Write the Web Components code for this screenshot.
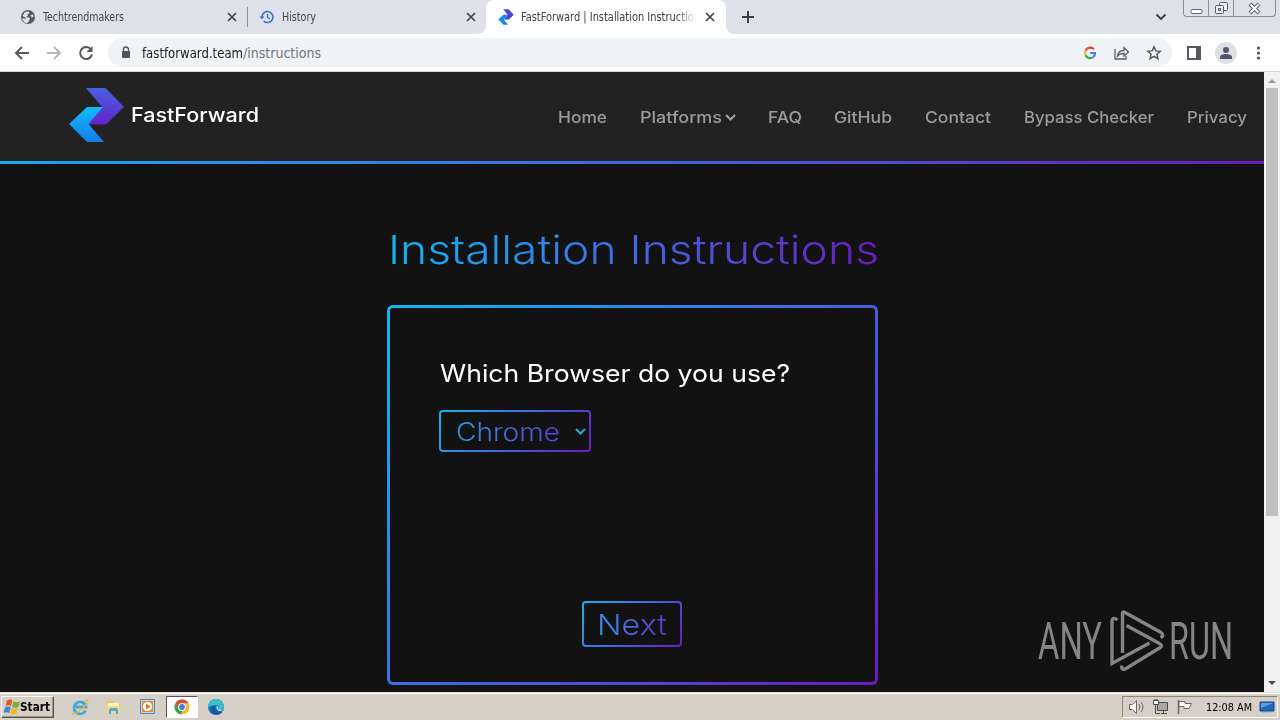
<!DOCTYPE html>
<html lang="en">
<head>
<meta charset="utf-8">
<title>FastForward | Installation Instructions</title>
<style>
html, body { margin: 0; width: 1280px; height: 720px; overflow: hidden; background: #121212; }
body { display: flex; flex-direction: column; font-family: Inter, sans-serif; }
</style>
</head>
<body>
<tab-strip></tab-strip>
<nav-toolbar></nav-toolbar>
<page-view>
  <site-header></site-header>
  <install-steps heading="Installation Instructions">Which Browser do you use?</install-steps>
</page-view>
<task-bar></task-bar>

<script>
function component(name, html) {
    customElements.define(name, class extends HTMLElement {
        connectedCallback() {
            if (this.shadowRoot) return;
            this.attachShadow({mode: 'open'});
            this.shadowRoot.innerHTML = html.replace(/\{(\w+)\}/g, (m, key) => this.getAttribute(key) || '');
        }
    });
}

const gradient = '#0fb8f2, #4268e2 50%, #6a1cbe';

component('browser-tab', `
<style>
:host { display: flex; box-sizing: border-box; width: 239px; height: 34px; align-items: center; padding: 0 1px 0 20px; position: relative; color: #42464d; }
:host([active]) { width: 240px; background: #fff; border-radius: 8px 8px 0 0; padding: 0 10px 0 12px; color: #3c4043; }
:host([active])::before, :host([active])::after { content: ''; position: absolute; bottom: 0; left: -8px; width: 8px; height: 8px; background: radial-gradient(circle at 0 0, transparent 7.5px, #fff 8px); }
:host([active])::after { left: auto; right: -8px; background: radial-gradient(circle at 100% 0, transparent 7.5px, #fff 8px); }
.title { flex: 1; margin-left: 7px; overflow: hidden; height: 20px; font: 12px/20px "DejaVu Sans Condensed", "DejaVu Sans", sans-serif; }
:host([active]) .title { -webkit-mask: linear-gradient(90deg, #000 155px, transparent 176px); }
svg { display: block; }
</style>
<slot name="icon"></slot>
<div class="title"><slot></slot></div>
<svg width="12" height="12" viewBox="0 0 12 12"><path d="M2 2l8 8M10 2l-8 8" stroke="#40444a" stroke-width="1.7"/></svg>
`);

component('tab-strip', `
<style>
:host { display: flex; height: 34px; background: #dee1e8; }
svg { display: block; }
i { width: 1px; height: 20px; margin: 7px -9px 0 8px; background: #8c9097; }
.plus { margin: 9px 0 0 14px; }
.down { margin: 12px 22px 0 auto; }
.win { display: flex; width: 91px; height: 16px; margin: 0 4px 0 -6px; border: 1px solid #8b8e95; border-top: 0; border-radius: 0 0 4px 4px; }
.win div { display: flex; width: 24px; align-items: center; justify-content: center; border-right: 1px solid #8b8e95; }
.win div:last-child { flex: 1; border: 0; }
</style>
<browser-tab>
  <svg slot="icon" width="16" height="16" viewBox="0 0 16 16"><circle cx="8" cy="8" r="7" fill="#54585e"/><path d="M2.500 7l2.500-4 3.500-.5 1 1.500-2 1.500.5 1-2 1.500 3 .5 1 1.500-1.500 3-2 1.500 1 .3C4 13.500 2 11 2.300 9l3 1 .7-1zM10.500 6l2.700-.5.3 2.500-2 .5z" fill="#dee1e8"/></svg>
  <fit-text w="81">Techtrendmakers</fit-text>
</browser-tab>
<i></i>
<browser-tab>
  <svg slot="icon" width="16" height="16" viewBox="0 0 16 16" fill="none" stroke="#3b6fd2" stroke-width="1.6"><path d="M3 8a5.500 5.500 0 1 1 1.800 4.100"/><path d="M8.500 5v3.400l2.300 1.300" stroke-width="1.300"/><path d="M.5 7.500h5L3 10.300z" fill="#3b6fd2" stroke="none"/></svg>
  <fit-text w="34">History</fit-text>
</browser-tab>
<browser-tab active style="margin-left:8px">
  <svg slot="icon" width="16" height="16" viewBox="0 0 56 56"><path d="M18 1h19l18 19-17 17H20l14-17z" fill="#5043d7"/><path d="M19 20h16L20 37l15 18H19L1 37z" fill="#128bed"/></svg>
  <fit-text w="179">FastForward | Installation Instruction</fit-text>
</browser-tab>
<svg class="plus" width="16" height="16" viewBox="0 0 16 16"><path d="M8 2v12M2 8h12" stroke="#3b3e44" stroke-width="2"/></svg>
<svg class="down" width="12" height="10" viewBox="0 0 12 10"><path d="M1.500 2.500L6 7l4.500-4.500" fill="none" stroke="#3b3e44" stroke-width="1.800"/></svg>
<div class="win">
  <div><svg width="13" height="14"><rect x="1" y="8.500" width="11" height="4" rx="1" fill="#fff" stroke="#656970"/></svg></div>
  <div><svg width="13" height="14" fill="#eceef2" stroke="#555960"><rect x="4.500" y="1.500" width="8" height="8" rx="1"/><rect x=".5" y="4.500" width="8" height="8" rx="1"/><rect x="3.500" y="7.500" width="2" height="2"/></svg></div>
  <div><svg width="13" height="13"><path d="M2 2l9 9M11 2l-9 9" stroke="#5e6269" stroke-width="4"/><path d="M2.500 2.500l8 8M10.500 2.500l-8 8" stroke="#fff" stroke-width="2"/></svg></div>
</div>
`);

component('nav-toolbar', `
<style>
:host { display: flex; box-sizing: border-box; height: 38px; background: #fff; border-bottom: 1px solid #d5d6d8; align-items: center; padding: 0 13px 0 14px; }
svg { display: block; flex: none; }
.url { display: flex; align-items: center; box-sizing: border-box; width: 1064px; flex: none; height: 29px; margin: 0 14px 0 14px; padding: 0 10px; border-radius: 15px; background: #f0f3f5; font: 14px/28px "DejaVu Sans Condensed", "DejaVu Sans", sans-serif; color: #202124; }
.url .lock { margin-right: 8px; }
.path { color: #70757a; }
.g { margin-left: auto; }
.user { margin: 0 14px 0 13px; }
</style>
<svg width="80" height="16" viewBox="0 0 80 16" fill="none" stroke="#55585d" stroke-width="2">
  <path d="M15 8H2M8 2L2 8l6 6"/>
  <path d="M33 8h12.500M40 2l6 6-6 6" stroke="#b5b7ba"/>
  <path d="M77 4.500A6 6 0 1 0 78 9.500"/><path d="M78.500 1v6h-6z" fill="#55585d" stroke="none"/>
</svg>
<div class="url">
  <svg class="lock" width="16" height="16" viewBox="0 0 16 16"><rect x="4" y="6" width="8" height="7" rx="1" fill="#505358"/><path d="M5.500 6.500v-2a2.500 2.500 0 0 1 5 0v2" fill="none" stroke="#505358" stroke-width="1.400"/></svg>
  <fit-text w="101">fastforward.team</fit-text><fit-text class="path" w="78">/instructions</fit-text>
  <svg class="g" width="14" height="14" viewBox="0 0 14 14" fill="none" stroke-width="2.200"><path d="M11 3.300A5 5 0 0 0 2.600 4.700" stroke="#e64434"/><path d="M2.600 4.700a5 5 0 0 0 0 4.600" stroke="#f3b720"/><path d="M2.600 9.300a5 5 0 0 0 7.700 1.700" stroke="#37a454"/><path d="M10.300 11A5 5 0 0 0 12 7H7.200" stroke="#4380e8"/></svg>
  <svg style="margin-left:16px" width="18" height="16" viewBox="0 0 18 16" fill="none" stroke="#5b5f64" stroke-width="1.300"><path d="M2 4v10h11v-3"/><path d="M4.500 11c.5-4 3-5.500 6.500-5.500V2.500L15.500 7 11 11V8.500c-3 0-5 .5-6.500 2.500z"/></svg>
  <svg style="margin-left:15px" width="16" height="16" viewBox="0 0 16 16" fill="none" stroke="#55595e" stroke-width="1.500"><path d="M8 1.800l1.800 4.100 4.500.4-3.400 3 1 4.400L8 11.400l-3.900 2.300 1-4.400-3.400-3 4.500-.4z"/></svg>
</div>
<svg width="16" height="16" viewBox="0 0 16 16"><path d="M1 1h14v14H1zM3 3v10h7V3z" fill="#55585d" fill-rule="evenodd"/></svg>
<svg class="user" width="22" height="22" viewBox="0 0 22 22"><circle cx="11" cy="11" r="11" fill="#dde1e5"/><circle cx="11" cy="8" r="3" fill="#4d5870"/><path d="M5 17v-2c0-2 3-3 6-3s6 1 6 3v2z" fill="#4d5870"/></svg>
<svg width="18" height="16" viewBox="0 0 18 16" fill="#4e5156"><circle cx="7.500" cy="3" r="1.600"/><circle cx="7.500" cy="8" r="1.600"/><circle cx="7.500" cy="13" r="1.600"/></svg>
`);

component('page-view', `
<style>
:host { display: flex; height: 620px; position: relative; background: #121212; overflow: hidden; }
main { width: 1264px; }
aside { display: flex; flex-direction: column; width: 16px; background: #f1f1f1; align-items: center; }
.thumb { width: 12px; height: 428px; background: #c1c1c1; }
.arrow { height: 16px; }
.arrow:last-child { margin-top: auto; }
.mark { display: flex; gap: 1px; position: absolute; left: 1038px; top: 534px; color: #858585; font: 52px/71px Roboto, sans-serif; }
.mark svg { display: block; }
</style>
<main><slot></slot></main>
<aside>
  <svg class="arrow" width="16"><path d="M4 11l4-4 4 4z" fill="#9b9b9b"/></svg>
  <div class="thumb"></div>
  <svg class="arrow" width="16"><path d="M4 5l4 4 4-4z" fill="#4c4c4c"/></svg>
</aside>
<div class="mark">
  <fit-text w="64">ANY</fit-text>
  <svg width="65" height="72" viewBox="67 0 65 72" fill="none" stroke="#858585" stroke-width="3.400">
    <path d="M81.500 14Q76 10 76 16V57.500L113.500 37"/>
    <path d="M86.500 47V7.500Q86.500 5 89 6.500L125 26.500Q129 29.500 124.500 31.500"/>
    <path d="M90.500 19.500L123.500 37.500Q127.500 39.500 123.500 42L90 62.500Q85.500 65 85.500 59.500"/>
  </svg>
  <fit-text w="64">RUN</fit-text>
</div>
`);

component('nav-link', `
<style>
:host { display: flex; align-items: center; font-size: 16px; font-weight: 500; line-height: 24px; color: #9c9c9c; }
svg { display: none; margin-left: 3px; }
:host([menu]) svg { display: block; }
</style>
<fit-text w="{w}"><slot></slot></fit-text>
<svg width="11" height="10" viewBox="0 0 11 10"><path d="M1 3L5.500 7.500l4.500-4.500" fill="none" stroke="#a4a4a4" stroke-width="2"/></svg>
`);

component('site-header', `
<style>
:host { display: flex; flex-direction: column; height: 92px; background: #222; }
.bar { display: flex; height: 89px; align-items: center; padding: 0 17px 0 68px; }
.brand { display: flex; align-items: center; gap: 7px; padding-bottom: 3px; color: #fff; font-size: 20px; font-weight: 450; line-height: 28px; }
nav { display: flex; gap: 33px; margin-left: auto; }
.line { height: 3px; background: linear-gradient(90deg, #1fa6e8, #4268e2 50%, #6a1cbe); }
</style>
<div class="bar">
  <div class="brand">
    <svg width="56" height="56" viewBox="0 0 56 56">
      <defs>
        <linearGradient id="a" x1=".5" y1="0" x2=".4" y2="1"><stop stop-color="#4862e2"/><stop offset="1" stop-color="#6422c8"/></linearGradient>
        <linearGradient id="b" x1=".5" y1="0" x2=".5" y2="1"><stop stop-color="#12bdf4"/><stop offset="1" stop-color="#137cf0"/></linearGradient>
      </defs>
      <path d="M18 1h19.500L56 20 38 37.500H19L34 20z" fill="url(#a)"/>
      <path d="M19 20h16L20.500 37 36 55H19L1 37z" fill="url(#b)"/>
    </svg>
    <fit-text w="128">FastForward</fit-text>
  </div>
  <nav>
    <nav-link w="49">Home</nav-link>
    <nav-link w="82" menu style="margin-right:-1px">Platforms</nav-link>
    <nav-link w="34">FAQ</nav-link>
    <nav-link w="58" style="margin-left:-1px">GitHub</nav-link>
    <nav-link w="66">Contact</nav-link>
    <nav-link w="130">Bypass Checker</nav-link>
    <nav-link w="60">Privacy</nav-link>
  </nav>
</div>
<div class="line"></div>
`);

component('install-steps', `
<style>
:host { display: block; width: 491px; padding: 61px 0 0 387px; --g: linear-gradient(135deg, ${gradient}); }
h1 { margin: 0 0 30px; font-size: 40px; font-weight: 300; line-height: 50px; height: 50px; --fill: linear-gradient(90deg, ${gradient}); }
h1 fit-text { margin-left: 1px; }
.card, .select, .next { box-sizing: border-box; border: 2px solid transparent; border-radius: 4px; background: linear-gradient(#121212, #121212) padding-box, var(--g) border-box; }
.card { height: 380px; border-width: 3px; border-radius: 6px; padding: 51px 50px 0; }
.q { height: 30px; margin-bottom: 21px; color: #fff; font-size: 24px; font-weight: 370; line-height: 30px; }
.select, .next { display: flex; align-items: center; font-weight: 300; --fill: linear-gradient(90deg, #2f96e2, #5c43da); }
.select { width: 152px; height: 42px; margin-left: -1px; padding-left: 15px; font-size: 25px; line-height: 38px; }
.select fit-text, .next fit-text { padding-top: 1px; }
.select svg { margin-left: 15px; }
.next { width: 100px; height: 46px; margin: 149px 0 0 142px; padding-left: 13px; font-size: 29px; line-height: 43px; --fill: linear-gradient(90deg, #2f8de6, #4c6ce4 40%, #5c35c8); }
</style>
<h1><fit-text w="491">{heading}</fit-text></h1>
<div class="card">
  <div class="q"><fit-text w="350"><slot></slot></fit-text></div>
  <div class="select"><fit-text w="104">Chrome</fit-text><svg width="11" height="10" viewBox="0 0 11 10"><path d="M1 3L5.500 7.500l4.500-4.500" fill="none" stroke="#20b4dc" stroke-width="2"/></svg></div>
  <div class="next"><fit-text w="70">Next</fit-text></div>
</div>
`);

component('task-bar', `
<style>
:host { display: flex; box-sizing: border-box; height: 28px; background: #d6cfc6; border-top: 1px solid #e4e0d8; box-shadow: inset 0 1px #fff; padding: 3px 2px 2px 1px; font-family: "DejaVu Sans Condensed", "DejaVu Sans", sans-serif; font-size: 11px; color: #000; }
svg { display: block; flex: none; }
.start { display: flex; box-sizing: border-box; width: 53px; height: 22px; align-items: center; padding-left: 2px; border: 1px solid; border-color: #fff #555 #555 #fff; box-shadow: inset -1px -1px #9b958c; font-size: 12px; font-weight: bold; line-height: 19px; }
.quick { display: flex; align-items: center; margin-left: 17px; gap: 16px; }
.pressed { display: flex; box-sizing: border-box; width: 32px; height: 22px; margin: 0 -7px; align-items: center; justify-content: center; background: #fff; border: 1px solid; border-color: #555 #fff #fff #555; }
.tray { display: flex; box-sizing: border-box; width: 156px; height: 22px; margin-left: auto; padding: 0 1px 0 5px; align-items: center; border: 1px solid; border-color: #8b857c #fff #fff #8b857c; line-height: 19px; }
</style>
<div class="start">
  <svg width="16" height="16" viewBox="0 0 16 16"><path d="M3 1.500q3-2 5.500 0L7 7Q5 5.500 1.500 7z" fill="#e25a2a"/><path d="M9.500 2.500q3 1.500 6.500 0L14.500 8q-3 1.500-6.500 0z" fill="#79ad3a"/><path d="M1.200 8.200q3-1.500 5.500 0L5 14q-2-1.500-5.500 0z" fill="#3b85cf"/><path d="M7.500 9q3 1.500 6.500 0l-1.500 5.500q-3 1.500-6.500 0z" fill="#f0b62a"/></svg>
  <fit-text w="30">Start</fit-text>
</div>
<div class="quick">
  <svg width="18" height="18" viewBox="0 0 18 18" fill="none"><path d="M14.500 12.500a6 6 0 1 1 .5-3.500H5" stroke="#41a8dc" stroke-width="2.800"/><path d="M2 15Q.5 17 4 15.500 15 9 17 3q0-2-4 0" stroke="#e4b739" stroke-width="1.300"/></svg>
  <svg width="18" height="18" viewBox="0 0 18 18"><path d="M2 3h6l1 2h6v9H2z" fill="#e6c45e"/><path d="M3 5h11v3H3z" fill="#fff5c2"/><path d="M1 8h15l-1 7H2z" fill="#f1d885"/><path d="M4 16v-4q0-2 2-2h5q2 0 2 2v4h-2v-3H6v3z" fill="#55a5d5"/></svg>
  <svg width="18" height="18" viewBox="0 0 18 18"><path d="M1.500 1.500h14v14h-14z" fill="#b7d5eb" stroke="#568cb8"/><path d="M3 3h11v11H3z" fill="#ef8a20"/><circle cx="8.500" cy="8.500" r="4.600" fill="#fff"/><path d="M7 5.500L11.800 8.500 7 11.500z" fill="#e4761a"/></svg>
  <div class="pressed"><svg width="16" height="16" viewBox="0 0 16 16"><circle cx="8" cy="8" r="7.500" fill="#f2bd28"/><path d="M1.500 4.250A7.500 7.500 0 0 1 14.500 4.250H8L4.750 9.900z" fill="#dc4433"/><path d="M1.500 4.250L4.750 9.900 8 11.500l-.6 4A7.500 7.500 0 0 1 1.500 4.250z" fill="#36a252"/><circle cx="8" cy="8" r="3.900" fill="#fff"/><circle cx="8" cy="8" r="2.900" fill="#3f7de4"/></svg></div>
  <svg width="18" height="18" viewBox="0 0 18 18"><circle cx="9" cy="9" r="8" fill="#176fc0"/><path d="M1 9a8 8 0 0 1 16 0c0 3-4 4-6 2 1-1 1-4-2-4-4 0-6 2-8 2z" fill="#36bfc5"/><path d="M8 8c-2 4 2 7 7 6-3 4-9 3-11-1-1-3 1-5 4-5z" fill="#1557a0"/><path d="M9.500 8c2 0 2 2 1.500 3l5 1c-3 2-7 1-6.500-4z" fill="#d6cfc6"/></svg>
</div>
<div class="tray">
  <svg width="18" height="16" viewBox="0 0 18 16" fill="#fff" stroke="#6b6863"><path d="M1.500 5.500h3l4-4v13l-4-4h-3z"/><path d="M11 5q2 3 0 6M13 3q4 5 0 10" fill="none"/></svg>
  <svg style="margin-left:6px" width="18" height="16" viewBox="0 0 18 16" fill="#fff" stroke="#4d4b48"><path d="M5.500 3.500h10v8h-10z" fill="#aaa8a4"/><path d="M9 14.500h6M11.500 12v2M3.500 6v8.500H8" fill="none"/><path d="M1.500 1.500h5v4h-5zM3 0v2M5 0v2"/></svg>
  <svg style="margin-left:6px" width="18" height="16" viewBox="0 0 18 16" fill="#fff" stroke="#6b6863"><path d="M2.500 1v14" stroke-width="1.500"/><path d="M3 2.500h6v2h6.500L13 9.500H8v-2H3z"/></svg>
  <fit-text style="margin-left:12px" w="46">12:08 AM</fit-text>
  <svg style="margin-left:7px" width="16" height="16" viewBox="0 0 16 16"><path d="M1 3h14v9H1z" fill="#2368bd" stroke="#174581"/><path d="M2 4h12L2 9z" fill="#5fa2e4"/><path d="M3 13.500h9" stroke="#a7bed4"/></svg>
</div>
`);

// Text stretched or squeezed to the width in its "w" attribute.
// Registered last, so that everything around it is laid out when it measures.
customElements.define('fit-text', class extends HTMLElement {
    connectedCallback() {
        if (this.shadowRoot) return;
        const w = +this.getAttribute('w');
        this.attachShadow({mode: 'open'});
        this.shadowRoot.innerHTML = `
        <style>
        :host { display: block; flex: none; width: ${w}px; white-space: nowrap; }
        span { display: inline-block; vertical-align: top; transform-origin: 0 0; background: var(--fill, none); }
        .filled { -webkit-background-clip: text; background-clip: text; color: transparent; }
        </style><span><slot></slot></span>`;
        const span = this.shadowRoot.querySelector('span');
        if (getComputedStyle(this).getPropertyValue('--fill').trim()) span.className = 'filled';
        span.style.transform = 'scaleX(' + w / span.getBoundingClientRect().width + ')';
    }
});
</script>
</body>
</html>
